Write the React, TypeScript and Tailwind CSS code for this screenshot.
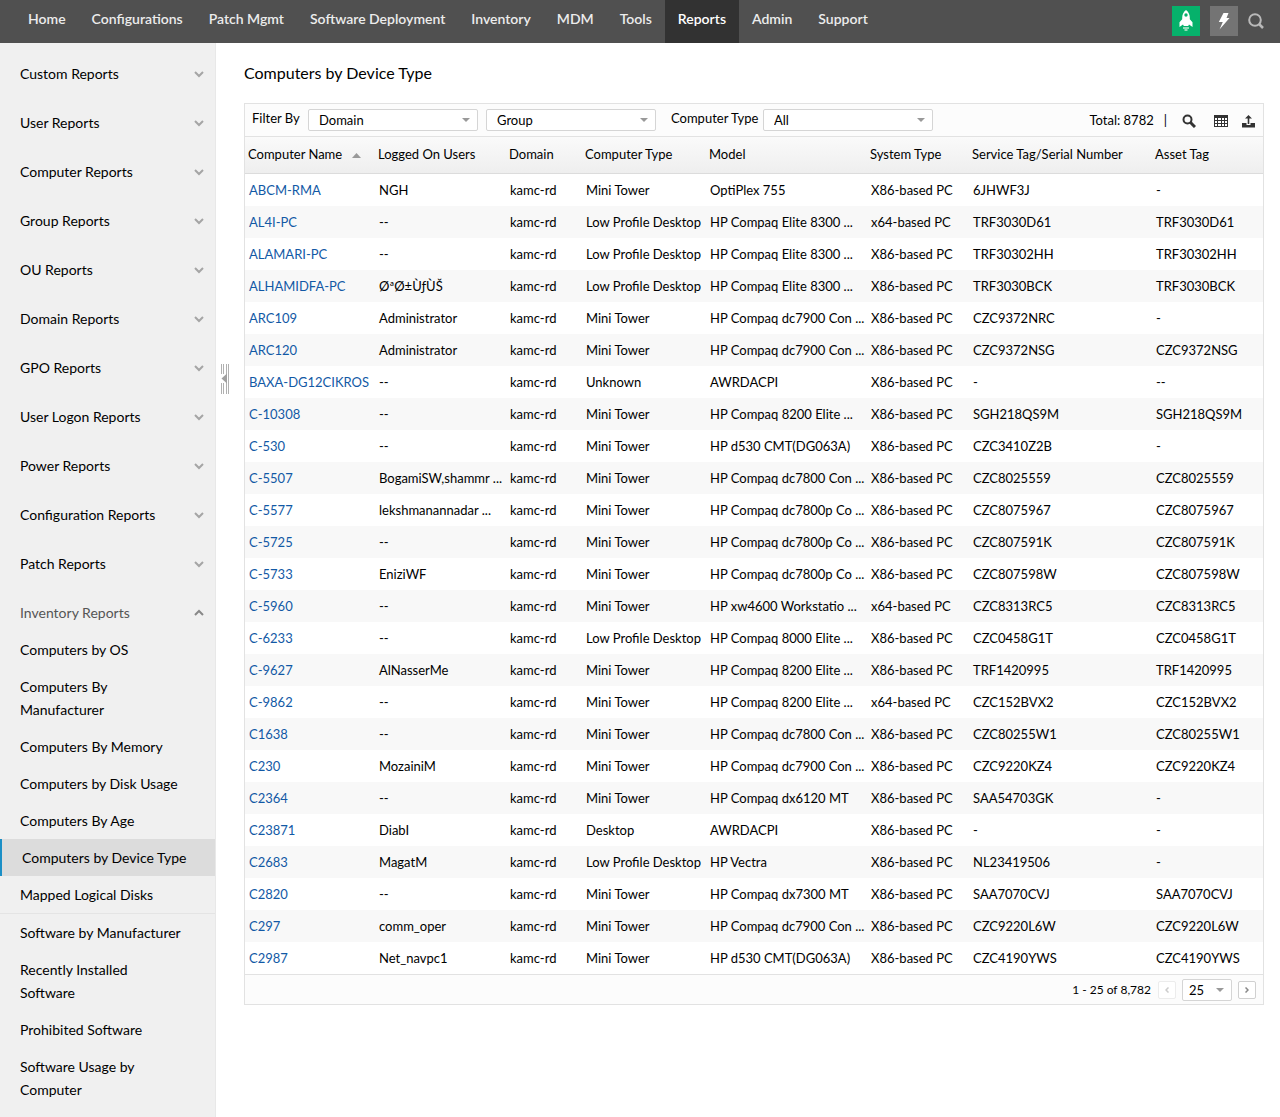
import { useState } from 'react';
import clsx from 'clsx';

const navItems = [
  'Home',
  'Configurations',
  'Patch Mgmt',
  'Software Deployment',
  'Inventory',
  'MDM',
  'Tools',
  'Reports',
  'Admin',
  'Support',
];

const reportGroups = [
  'Custom Reports',
  'User Reports',
  'Computer Reports',
  'Group Reports',
  'OU Reports',
  'Domain Reports',
  'GPO Reports',
  'User Logon Reports',
  'Power Reports',
  'Configuration Reports',
  'Patch Reports',
];

const hardwareReports = [
  'Computers by OS',
  'Computers By Manufacturer',
  'Computers By Memory',
  'Computers by Disk Usage',
  'Computers By Age',
  'Computers by Device Type',
  'Mapped Logical Disks',
];

const softwareReports = [
  'Software by Manufacturer',
  'Recently Installed Software',
  'Prohibited Software',
  'Software Usage by Computer',
];

const columns = [
  { label: 'Computer Name', width: 'w-[130px]' },
  { label: 'Logged On Users', width: 'w-[131px]' },
  { label: 'Domain', width: 'w-[76px]' },
  { label: 'Computer Type', width: 'w-[124px]' },
  { label: 'Model', width: 'w-[161px]' },
  { label: 'System Type', width: 'w-[102px]' },
  { label: 'Service Tag/Serial Number', width: 'w-[183px]' },
  { label: 'Asset Tag', width: '' },
];

// name, user, domain, computer type, model, system type, serial, asset tag
const computers = [
  ['ABCM-RMA', 'NGH', 'kamc-rd', 'Mini Tower', 'OptiPlex 755', 'X86-based PC', '6JHWF3J', '-'],
  ['AL4I-PC', '--', 'kamc-rd', 'Low Profile Desktop', 'HP Compaq Elite 8300 ...', 'x64-based PC', 'TRF3030D61', 'TRF3030D61'],
  ['ALAMARI-PC', '--', 'kamc-rd', 'Low Profile Desktop', 'HP Compaq Elite 8300 ...', 'X86-based PC', 'TRF30302HH', 'TRF30302HH'],
  ['ALHAMIDFA-PC', 'ØªØ±ÙƒÙŠ', 'kamc-rd', 'Low Profile Desktop', 'HP Compaq Elite 8300 ...', 'X86-based PC', 'TRF3030BCK', 'TRF3030BCK'],
  ['ARC109', 'Administrator', 'kamc-rd', 'Mini Tower', 'HP Compaq dc7900 Con ...', 'X86-based PC', 'CZC9372NRC', '-'],
  ['ARC120', 'Administrator', 'kamc-rd', 'Mini Tower', 'HP Compaq dc7900 Con ...', 'X86-based PC', 'CZC9372NSG', 'CZC9372NSG'],
  ['BAXA-DG12CIKROS', '--', 'kamc-rd', 'Unknown', 'AWRDACPI', 'X86-based PC', '-', '--'],
  ['C-10308', '--', 'kamc-rd', 'Mini Tower', 'HP Compaq 8200 Elite ...', 'X86-based PC', 'SGH218QS9M', 'SGH218QS9M'],
  ['C-530', '--', 'kamc-rd', 'Mini Tower', 'HP d530 CMT(DG063A)', 'X86-based PC', 'CZC3410Z2B', '-'],
  ['C-5507', 'BogamiSW,shammr ...', 'kamc-rd', 'Mini Tower', 'HP Compaq dc7800 Con ...', 'X86-based PC', 'CZC8025559', 'CZC8025559'],
  ['C-5577', 'lekshmanannadar ...', 'kamc-rd', 'Mini Tower', 'HP Compaq dc7800p Co ...', 'X86-based PC', 'CZC8075967', 'CZC8075967'],
  ['C-5725', '--', 'kamc-rd', 'Mini Tower', 'HP Compaq dc7800p Co ...', 'X86-based PC', 'CZC807591K', 'CZC807591K'],
  ['C-5733', 'EniziWF', 'kamc-rd', 'Mini Tower', 'HP Compaq dc7800p Co ...', 'X86-based PC', 'CZC807598W', 'CZC807598W'],
  ['C-5960', '--', 'kamc-rd', 'Mini Tower', 'HP xw4600 Workstatio ...', 'x64-based PC', 'CZC8313RC5', 'CZC8313RC5'],
  ['C-6233', '--', 'kamc-rd', 'Low Profile Desktop', 'HP Compaq 8000 Elite ...', 'X86-based PC', 'CZC0458G1T', 'CZC0458G1T'],
  ['C-9627', 'AlNasserMe', 'kamc-rd', 'Mini Tower', 'HP Compaq 8200 Elite ...', 'X86-based PC', 'TRF1420995', 'TRF1420995'],
  ['C-9862', '--', 'kamc-rd', 'Mini Tower', 'HP Compaq 8200 Elite ...', 'x64-based PC', 'CZC152BVX2', 'CZC152BVX2'],
  ['C1638', '--', 'kamc-rd', 'Mini Tower', 'HP Compaq dc7800 Con ...', 'X86-based PC', 'CZC80255W1', 'CZC80255W1'],
  ['C230', 'MozainiM', 'kamc-rd', 'Mini Tower', 'HP Compaq dc7900 Con ...', 'X86-based PC', 'CZC9220KZ4', 'CZC9220KZ4'],
  ['C2364', '--', 'kamc-rd', 'Mini Tower', 'HP Compaq dx6120 MT', 'X86-based PC', 'SAA54703GK', '-'],
  ['C23871', 'DiabI', 'kamc-rd', 'Desktop', 'AWRDACPI', 'X86-based PC', '-', '-'],
  ['C2683', 'MagatM', 'kamc-rd', 'Low Profile Desktop', 'HP Vectra', 'X86-based PC', 'NL23419506', '-'],
  ['C2820', '--', 'kamc-rd', 'Mini Tower', 'HP Compaq dx7300 MT', 'X86-based PC', 'SAA7070CVJ', 'SAA7070CVJ'],
  ['C297', 'comm_oper', 'kamc-rd', 'Mini Tower', 'HP Compaq dc7900 Con ...', 'X86-based PC', 'CZC9220L6W', 'CZC9220L6W'],
  ['C2987', 'Net_navpc1', 'kamc-rd', 'Mini Tower', 'HP d530 CMT(DG063A)', 'X86-based PC', 'CZC4190YWS', 'CZC4190YWS'],
];

function RocketIcon() {
  return (
    <svg width="16" height="22" viewBox="0 0 16 22">
      <path
        fill="#fff"
        fillRule="evenodd"
        d="M8 0C5.400 2 4.200 4.600 4.200 7.500V9.300L1.500 12.200V17L5 14.600L5.800 16H10.200L11 14.600L14.500 17V12.200L11.800 9.300V7.500C11.800 4.600 10.600 2 8 0ZM8 3.300A1.700 1.700 0 1 1 8 6.700A1.700 1.700 0 0 1 8 3.300Z"
      />
      <path fill="#8fdcb8" d="M5 17H11V19H9.500V21H6.500V19H5Z" />
    </svg>
  );
}

function BoltIcon() {
  return (
    <svg width="12" height="18" viewBox="0 0 12 18">
      <path fill="#fff" d="M5.500 1H10.500L8.500 6H11.500L1.500 17.500L4.800 10H0.800Z" />
    </svg>
  );
}

function Chevron({ open }: { open?: boolean }) {
  return (
    <svg width="10" height="8" viewBox="0 0 10 8" fill="none" stroke={open ? '#888' : '#a5a5a5'} strokeWidth="2">
      <path d={open ? 'M1 6L5 2L9 6' : 'M1 2L5 6L9 2'} />
    </svg>
  );
}

function Select({ id, options, className }: { id: string; options: string[]; className: string }) {
  return (
    <div className="relative">
      <select
        id={id}
        aria-label={id}
        className={clsx('block h-[22px] appearance-none rounded-xs border border-[#d5d5d5] bg-white pt-px text-[13px] text-black', className)}
      >
        {options.map((option) => (
          <option key={option}>{option}</option>
        ))}
      </select>
      <svg className="pointer-events-none absolute inset-y-0 right-2 my-auto" width="8" height="4" viewBox="0 0 8 4">
        <path fill="#999" d="M0 0H8L4 4Z" />
      </svg>
    </div>
  );
}

function SubReports({ items, active, onSelect }: { items: string[]; active: string; onSelect: (item: string) => void }) {
  return (
    <ul>
      {items.map((item) => (
        <li key={item}>
          <a
            href="#"
            onClick={() => onSelect(item)}
            className={clsx(
              'block py-[7px] pl-5',
              item === active ? 'border-l-2 border-[#1b8fc6] bg-[#dcdcdc] pr-5' : 'pr-8'
            )}
          >
            {item}
          </a>
        </li>
      ))}
    </ul>
  );
}

function Header() {
  return (
    <header className="flex h-[43px] items-stretch justify-between bg-[#505050]">
      <nav className="flex pl-[15px] text-sm font-semibold">
        {navItems.map((item) => (
          <a
            key={item}
            href="#"
            className={clsx(
              'px-[13px] pt-[9px]',
              item === 'Reports' ? 'bg-[#323232] text-white' : 'text-[#ececec]'
            )}
          >
            {item}
          </a>
        ))}
      </nav>
      <div className="flex items-center pr-4 pb-px">
        <button aria-label="Quick start" className="flex h-[30px] w-7 items-center justify-center bg-[#06b16b]">
          <RocketIcon />
        </button>
        <button aria-label="Actions" className="ml-2.5 flex h-[30px] w-7 items-center justify-center bg-[#747474]">
          <BoltIcon />
        </button>
        <button aria-label="Search" className="ml-2.5">
          <svg width="16" height="16" viewBox="0 0 16 16" fill="none" stroke="#b9b9b9" strokeWidth="2">
            <circle cx="7" cy="7" r="5.800" />
            <path d="M11 11L15 15" strokeWidth="2.500" />
          </svg>
        </button>
      </div>
    </header>
  );
}

function Sidebar() {
  const [active, setActive] = useState('Computers by Device Type');

  return (
    <aside className="w-[216px] shrink-0 border-r border-[#e8e8e8] bg-[#f0f0f0] pt-1.5 pb-2 text-sm leading-[23px]">
      {reportGroups.map((group) => (
        <button key={group} className="flex w-full items-center justify-between py-[13px] pr-[11px] pl-5">
          {group}
          <Chevron />
        </button>
      ))}
      <button className="flex w-full items-center justify-between pt-[13px] pr-[11px] pb-[7px] pl-5 text-[#555]">
        Inventory Reports
        <Chevron open />
      </button>
      <SubReports items={hardwareReports} active={active} onSelect={setActive} />
      <div className="border-t border-[#e4e4e4]">
        <SubReports items={softwareReports} active={active} onSelect={setActive} />
      </div>
    </aside>
  );
}

function FilterBar() {
  return (
    <div className="flex h-[33px] items-center border-b border-[#e2e2e2] bg-[#fcfcfc] pr-2 pl-[7px]">
      <label htmlFor="Domain" className="w-14 pb-0.5">Filter By</label>
      <Select id="Domain" options={['Domain']} className="w-[170px] pl-2.5" />
      <div className="w-2" />
      <Select id="Group" options={['Group']} className="w-[170px] pl-2.5" />
      <label htmlFor="Computer Type" className="ml-[15px] w-[92px] pb-0.5 whitespace-nowrap">Computer Type</label>
      <Select id="Computer Type" options={['All']} className="w-[170px] pl-2.5" />
      <div className="ml-auto flex items-center pt-0.5">
        <span>Total: 8782</span>
        <span className="ml-2.5">|</span>
        <button aria-label="Search" className="ml-[15px]">
          <svg width="14" height="14" viewBox="0 0 14 14" fill="none" stroke="#333">
            <circle cx="5.500" cy="5.500" r="4" strokeWidth="2" />
            <path d="M8.500 8.500L13 13" strokeWidth="3" />
          </svg>
        </button>
        <button aria-label="Columns" className="ml-[18px]">
          <svg width="14" height="12" viewBox="0 0 14 12">
            <path fill="#333" d="M0 0H14V12H0Z" />
            <path
              fill="#fff"
              d="M1 3h2v2H1zM4 3h3v2H4zM8 3h2v2H8zM11 3h2v2h-2zM1 6h2v2H1zM4 6h3v2H4zM8 6h2v2H8zM11 6h2v2h-2zM1 9h2v2H1zM4 9h3v2H4zM8 9h2v2H8zM11 9h2v2h-2z"
            />
          </svg>
        </button>
        <button aria-label="Export" className="ml-3.5">
          <svg width="13" height="13" viewBox="0 0 13 13" fill="#333">
            <path d="M6.500 0L10 3.500H7.300V9H5.700V3.500H3Z" />
            <path d="M0 8H4.500V10H8.500V8H13V12.500H0Z" />
          </svg>
        </button>
      </div>
    </div>
  );
}

function ComputerTable() {
  return (
    <table className="w-full table-fixed border-separate border-spacing-0 text-left">
      <thead>
        <tr className="h-[37px] bg-linear-to-b from-[#fafafa] to-[#eeeeee]">
          {columns.map((column, i) => (
            <th
              key={column.label}
              className={clsx('border-b border-[#dcdcdc] pl-[3px] font-normal whitespace-nowrap', column.width)}
            >
              {column.label}
              {i === 0 && (
                <svg className="ml-2.5 inline-block" width="9" height="5" viewBox="0 0 9 5">
                  <path fill="#999" d="M4.500 0L9 5H0Z" />
                </svg>
              )}
            </th>
          ))}
        </tr>
      </thead>
      <tbody>
        {computers.map((row) => (
          <tr key={row[0]} className="h-8 even:bg-[#f8f8f8]">
            {row.map((cell, i) => (
              <td key={i} className="pt-0.5 pl-1 whitespace-nowrap">
                {i === 0 ? (
                  <a href="#" className="text-[#1259a5]">
                    {cell}
                  </a>
                ) : (
                  cell
                )}
              </td>
            ))}
          </tr>
        ))}
      </tbody>
    </table>
  );
}

function Pager() {
  return (
    <div className="flex h-[30px] items-center justify-end border-t border-[#e2e2e2] bg-[#fcfcfc] pr-[7px]">
      <span className="text-xs">1 - 25 of 8,782</span>
      <button disabled aria-label="Previous page" className="ml-[7px] flex size-[18px] items-center justify-center rounded-xs border border-[#ececec] bg-white">
        <svg width="4" height="6" viewBox="0 0 4 6" fill="none" stroke="#ccc" strokeWidth="1.500">
          <path d="M3.500 0.500L1 3L3.500 5.500" />
        </svg>
      </button>
      <div className="ml-1.5">
        <Select id="Page size" options={['25']} className="w-[50px] pl-1.5" />
      </div>
      <button aria-label="Next page" className="ml-1.5 flex size-[18px] items-center justify-center rounded-xs border border-[#d0d0d0] bg-white">
        <svg width="4" height="6" viewBox="0 0 4 6" fill="none" stroke="#888" strokeWidth="1.500">
          <path d="M0.500 0.500L3 3L0.500 5.500" />
        </svg>
      </button>
    </div>
  );
}

export default function App() {
  return (
    <div className="flex min-h-screen flex-col bg-white font-['Lato',sans-serif] text-black">
      <Header />
      <div className="flex flex-1">
        <Sidebar />
        <button aria-label="Collapse sidebar" className="mt-[321px] ml-[5px] h-[30px] w-2 shrink-0 self-start">
          <svg width="8" height="30" viewBox="0 0 8 30">
            <path stroke="#b0b0b0" d="M0.500 0V30M2.500 0V30M5.500 0V30M7.500 0V30" />
            <path fill="#fff" d="M0 10H5V19H0Z" />
            <path fill="#a0a0a0" d="M6 9.500V19.500L0.500 14.500Z" />
          </svg>
        </button>
        <main className="min-w-0 flex-1 pt-[18px] pr-4 pl-[15px]">
          <h1 className="text-base leading-6">Computers by Device Type</h1>
          <div className="mt-[18px] border border-[#e2e2e2] text-[13px]">
            <FilterBar />
            <ComputerTable />
            <Pager />
          </div>
        </main>
      </div>
    </div>
  );
}
